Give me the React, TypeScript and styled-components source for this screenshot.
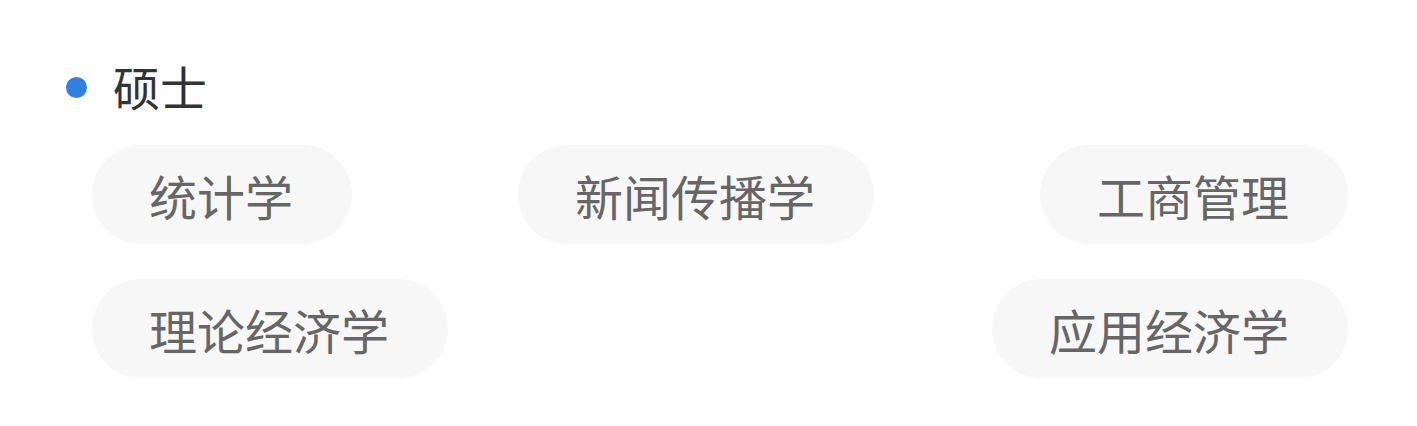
import styled, { createGlobalStyle } from "styled-components";

const GlobalStyle = createGlobalStyle`
  body {
    margin: 0;
    background: #ffffff;
    font-family: "Noto Sans CJK SC", "Noto Sans", sans-serif;
  }
`;

const Section = styled.div`
  padding: 58px 69px 0 66px;
`;

const Heading = styled.div`
  display: flex;
  align-items: center;
  gap: 26px;
  height: 56px;
`;

const Dot = styled.span`
  width: 21px;
  height: 21px;
  margin-top: 2px;
  border-radius: 50%;
  background: #2f80e0;
  flex-shrink: 0;
`;

const Title = styled.h2`
  margin: 0;
  font-size: 47px;
  font-weight: 400;
  line-height: 52px;
  color: #333333;
`;

const TagList = styled.div`
  display: flex;
  flex-wrap: wrap;
  justify-content: space-between;
  row-gap: 35px;
  margin: 31px 0 0 26px;
`;

const Tag = styled.span`
  display: flex;
  align-items: center;
  height: 99px;
  padding: 0 59px 0 57px;
  border-radius: 50px;
  background: #f7f7f7;
  color: #666666;
  font-size: 48px;
  line-height: 1;
  white-space: nowrap;
`;

const majors = ["统计学", "新闻传播学", "工商管理", "理论经济学", "应用经济学"];

const App = () => {
  return (
    <>
      <GlobalStyle />
      <Section>
        <Heading>
          <Dot />
          <Title>硕士</Title>
        </Heading>
        <TagList>
          {majors.map((m) => (
            <Tag key={m}>{m}</Tag>
          ))}
        </TagList>
      </Section>
    </>
  );
};

export default App;
